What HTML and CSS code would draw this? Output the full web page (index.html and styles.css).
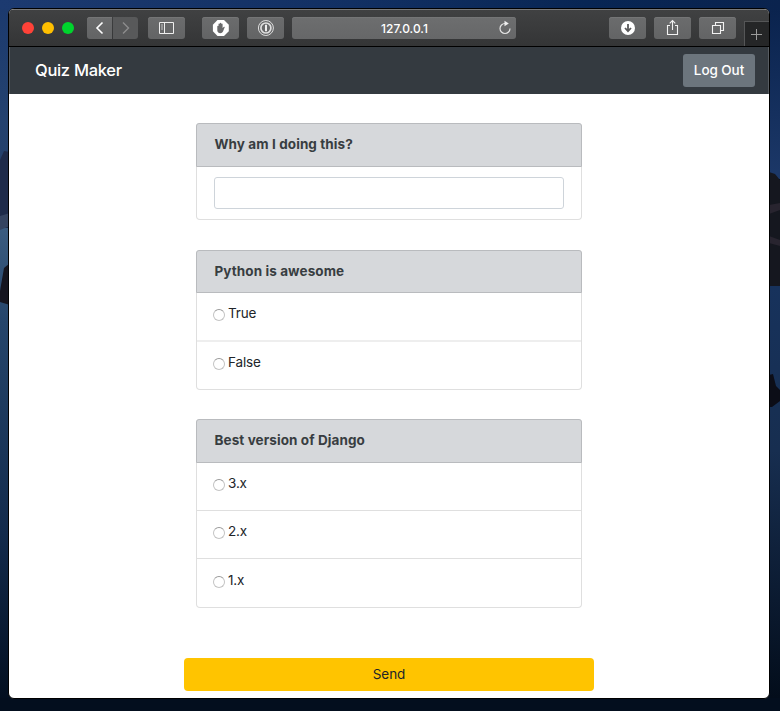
FILE: index.html
```html
<!DOCTYPE html>
<html lang="en">
<head>
<meta charset="utf-8">
<title>Quiz Maker</title>
<link rel="stylesheet" href="styles.css">
</head>
<body>
<svg class="wallpaper" viewBox="0 0 780 711" aria-hidden="true">
  <defs>
    <linearGradient id="top" x1="0" x2="1" y1="0" y2="0"><stop offset="0" stop-color="#1c3a70"/><stop offset=".45" stop-color="#123063"/><stop offset=".75" stop-color="#082654"/><stop offset="1" stop-color="#0a234e"/></linearGradient>
    <linearGradient id="left" x1="0" x2="0" y1="0" y2="1"><stop offset="0" stop-color="#1c3a6e"/><stop offset=".5" stop-color="#24426f"/><stop offset="1" stop-color="#253f67"/></linearGradient>
    <linearGradient id="seaL" x1="0" x2="0" y1="0" y2="1"><stop offset="0" stop-color="#3b5c80"/><stop offset=".2" stop-color="#25456b"/><stop offset=".65" stop-color="#132b4c"/><stop offset="1" stop-color="#030f20"/></linearGradient>
    <linearGradient id="seaR" x1="0" x2="0" y1="0" y2="1"><stop offset="0" stop-color="#17325c"/><stop offset=".4" stop-color="#172e50"/><stop offset="1" stop-color="#030d1b"/></linearGradient>
    <linearGradient id="skyR" x1="0" x2="0" y1="0" y2="1"><stop offset="0" stop-color="#0a234e"/><stop offset="1" stop-color="#1c3868"/></linearGradient>
  </defs>
  <rect width="780" height="711" fill="#030e1e"/>
  <rect width="780" height="20" fill="url(#top)"/>
  <rect y="9" width="10" height="220" fill="url(#left)"/>
  <path d="M0 160L4 151L10 152V232H0Z" fill="#1e2b4a"/>
  <rect y="228" width="10" height="470" fill="url(#seaL)"/>
  <path d="M0 216L10 213V226L0 230Z" fill="#354461"/>
  <path d="M0 291L4 268L10 263V305L0 302Z" fill="#15151f"/>
  <rect x="769" y="9" width="11" height="170" fill="url(#skyR)"/>
  <path d="M769 172L775 174L780 180V286H769Z" fill="#15171f"/>
  <path d="M769 205L780 203V210L769 214ZM769 236L780 240V246L769 243Z" fill="#28242f"/>
  <rect x="769" y="286" width="11" height="412" fill="url(#seaR)"/>
  <path d="M769 375L773 374L776 386L780 390V401L772 407H769Z" fill="#0c0d17"/>
</svg>
<div class="window">
  <header class="toolbar">
    <div class="lights"><i class="light red"></i><i class="light yellow"></i><i class="light green"></i></div>
    <div class="history">
      <span class="tool half back"><svg width="25" height="22" viewBox="0 0 25 22"><path d="M15.500 5.500L10 11L15.500 16.500" fill="none" stroke="#fff" stroke-width="1.600"/></svg></span>
      <span class="tool half forward"><svg width="25" height="22" viewBox="0 0 25 22"><path d="M10 5.500L15.500 11L10 16.500" fill="none" stroke="#8c8c8d" stroke-width="1.400"/></svg></span>
    </div>
    <span class="tool sidebar"><svg width="37" height="22" viewBox="0 0 37 22"><path d="M11.500 5.500H25.500V16.500H11.500ZM16.500 5.500V16.500" fill="none" stroke="#eee"/><path d="M13 8H15M13 10H15M13 12H15" stroke="#ddd" stroke-width=".8"/></svg></span>
    <span class="tool blocker"><svg width="37" height="22" viewBox="0 0 37 22"><path d="M15.500 3H22L26.800 7.700V14.300L22 19H15.500L10.900 14.300V7.700Z" fill="#fff"/><path d="M15.300 9.500Q15.300 8.700 16 8.700Q16.500 8.700 16.500 9.500V7.300Q16.500 6.600 17.100 6.600T17.800 7.300V6.500Q17.800 5.800 18.500 5.800T19.200 6.500V7.200Q19.200 6.500 19.900 6.500T20.600 7.200V11.200L21.600 9.900Q22.300 9.400 22.800 10.100L21 14.500Q20.300 16.300 18.300 16.300Q15.700 16.300 15.300 13.500Z" fill="#69696a"/></svg></span>
    <span class="tool password"><svg width="37" height="22" viewBox="0 0 37 22"><g fill="none" stroke="#dedede"><circle cx="18.900" cy="11" r="7.500"/><circle cx="18.900" cy="11" r="5" stroke-width="1.700"/></g><path d="M19 7.800V14.200" stroke="#eee" stroke-width="2"/></svg></span>
    <div class="address"><span>127.0.0.1</span>
      <svg class="reload" width="14" height="16" viewBox="0 0 14 16"><path d="M7 3.500A5 5 0 1 0 12 8.500" fill="none" stroke="#e4e4e4" stroke-width="1.200"/><path d="M6.500 .8L10.800 3.500L6.500 6.200Z" fill="#eee"/></svg>
    </div>
    <span class="tool download"><svg width="37" height="22" viewBox="0 0 37 22"><circle cx="19" cy="11" r="7" fill="#fff"/><path d="M19 7V13M16 11L19 14.200L22 11" fill="none" stroke="#59595a" stroke-width="1.800"/></svg></span>
    <span class="tool share"><svg width="37" height="22" viewBox="0 0 37 22"><path d="M16 8.500H13.500V17.500H23.500V8.500H21M18.500 13V3.500M15.700 6.300L18.500 3.500L21.300 6.300" fill="none" stroke="#f2f2f2" stroke-width="1.100"/></svg></span>
    <span class="tool tabs"><svg width="37" height="22" viewBox="0 0 37 22"><path d="M13.500 8.500H21.500V16.500H13.500ZM16.500 8.500V5.500H24.500V13.500H21.500" fill="none" stroke="#f2f2f2" stroke-width="1.100"/></svg></span>
    <span class="newtab"><svg width="24" height="24" viewBox="0 0 24 24"><path d="M6 12.500H17M11.500 7V18" stroke="#9b9b9b"/></svg></span>
  </header>
  <nav class="navbar"><span class="brand">Quiz Maker</span><button class="logout">Log Out</button></nav>
  <form class="quiz">
    <section class="card first">
      <h2 class="question">Why am I doing this?</h2>
      <div class="answer"><input class="field" type="text"></div>
    </section>
    <section class="card second">
      <h2 class="question">Python is awesome</h2>
      <label class="option"><i class="radio"></i>True</label>
      <label class="option last"><i class="radio"></i>False</label>
    </section>
    <section class="card third">
      <h2 class="question">Best version of Django</h2>
      <label class="option"><i class="radio"></i>3.x</label>
      <label class="option"><i class="radio"></i>2.x</label>
      <label class="option last"><i class="radio"></i>1.x</label>
    </section>
    <button class="send" type="button">Send</button>
  </form>
</div>
</body>
</html>
```
FILE: styles.css
```css
* { box-sizing: border-box; }
body { margin: 0; height: 711px; overflow: hidden; padding: 8px 10px 0 8px; font-family: Inter, "Liberation Sans", sans-serif; font-size: 13.5px; color: #212529; }
.wallpaper { position: absolute; inset: 0; width: 780px; height: 711px; z-index: -1; }
.window { width: 762px; height: 691px; border: 1px solid #000; border-radius: 6px; overflow: hidden; background: #fff; }
.toolbar { display: flex; height: 38px; padding-top: 7px; align-items: flex-start; border-top: 1px solid #777879; border-bottom: 1px solid #000; background: linear-gradient(#404142, #343536); }
.lights { display: flex; gap: 8px; padding: 5px 0 0 13px; width: 78px; }
.light { width: 12px; height: 12px; border-radius: 50%; }
.red { background: #ff4238; }
.yellow { background: #ffbf00; }
.green { background: #00d42d; }
.history { display: flex; gap: 1px; }
.tool { width: 37px; height: 22px; flex: none; border-radius: 3px; background: linear-gradient(#6b6c6d, #636465); box-shadow: inset 0 1px #747576; }
.tool svg, .newtab svg { display: block; }
.half { width: 25px; }
.back { border-radius: 3px 0 0 3px; }
.forward { border-radius: 0 3px 3px 0; background: #58595a; box-shadow: none; }
.sidebar { margin-left: 10px; }
.blocker { margin-left: 17px; }
.password { margin-left: 8px; }
.address { display: flex; width: 224px; height: 22px; flex: none; margin-left: 8px; padding-right: 4px; align-items: center; border-radius: 3px; background: linear-gradient(#6d6e6f, #666768); box-shadow: inset 0 1px #747576; color: #fff; font-size: 12px; font-weight: 500; }
.address span { flex: 1; text-align: center; padding: 1px 0 0 19px; }
.download { margin-left: 93px; }
.share, .tabs { margin-left: 8px; }
.newtab { width: 25px; height: 25px; margin: 4px 0 0 8px; border: solid #555657; border-width: 1px 0 0 1px; background: #252627; }
.navbar { display: flex; height: 47px; padding: 0 14px 0 26px; align-items: center; justify-content: space-between; background: #343a40; box-shadow: inset 1px 0 #585d62, inset -1px 0 #585d62; }
.brand { color: #fff; font-size: 16.5px; line-height: 22px; letter-spacing: -.3px; font-weight: 500; padding-bottom: 1px; }
button { font-family: inherit; border: 0; padding: 0; }
.logout { width: 72px; height: 33px; padding-bottom: 1px; border-radius: 3px; background: #6c757d; color: #fff; font-size: 13.5px; font-weight: 500; letter-spacing: -.07px; }
.quiz { padding: 29px 175px 0; }
.card { width: 386px; margin-left: 12px; border: 1px solid #dfdfdf; border-top: 0; border-radius: 4px; }
.first { height: 97px; }
.second { height: 140px; margin-top: 30px; }
.third { height: 189px; margin-top: 29px; }
.question { height: 44px; margin: 0 -1px; padding: 11px 17.5px 0; border: 1px solid #b9bbbe; border-radius: 3px 3px 0 0; background: #d6d8db; color: #383d41; font-size: 13.5px; line-height: 18px; font-weight: 700; letter-spacing: .09px; }
.second .question { height: 43px; }
.answer { padding: 10px 17px; }
.field { display: block; width: 350px; height: 32px; border: 1px solid #ced4da; border-radius: 3px; background: #fff; outline: 0; }
.option { display: flex; height: 48px; padding: 10px 0 0 16px; align-items: flex-start; gap: 4px; border-bottom: 1px solid #dfdfdf; line-height: 20px; letter-spacing: -.15px; }
.second .option:not(.last) { height: 49px; border-bottom: 2px solid #eee; }
.option.last { border: 0; }
.third .last { padding-top: 11px; }
.radio { width: 12px; height: 12px; margin: 6px -1px 0 0; border: 1px solid #c4c4c4; border-top-color: #999; border-radius: 50%; background: #fff; }
.send { display: block; width: 410px; height: 33px; margin-top: 50px; padding-bottom: 1px; border-radius: 4px; background: #ffc400; color: #212529; font-size: 13.5px; letter-spacing: -.1px; }
```
